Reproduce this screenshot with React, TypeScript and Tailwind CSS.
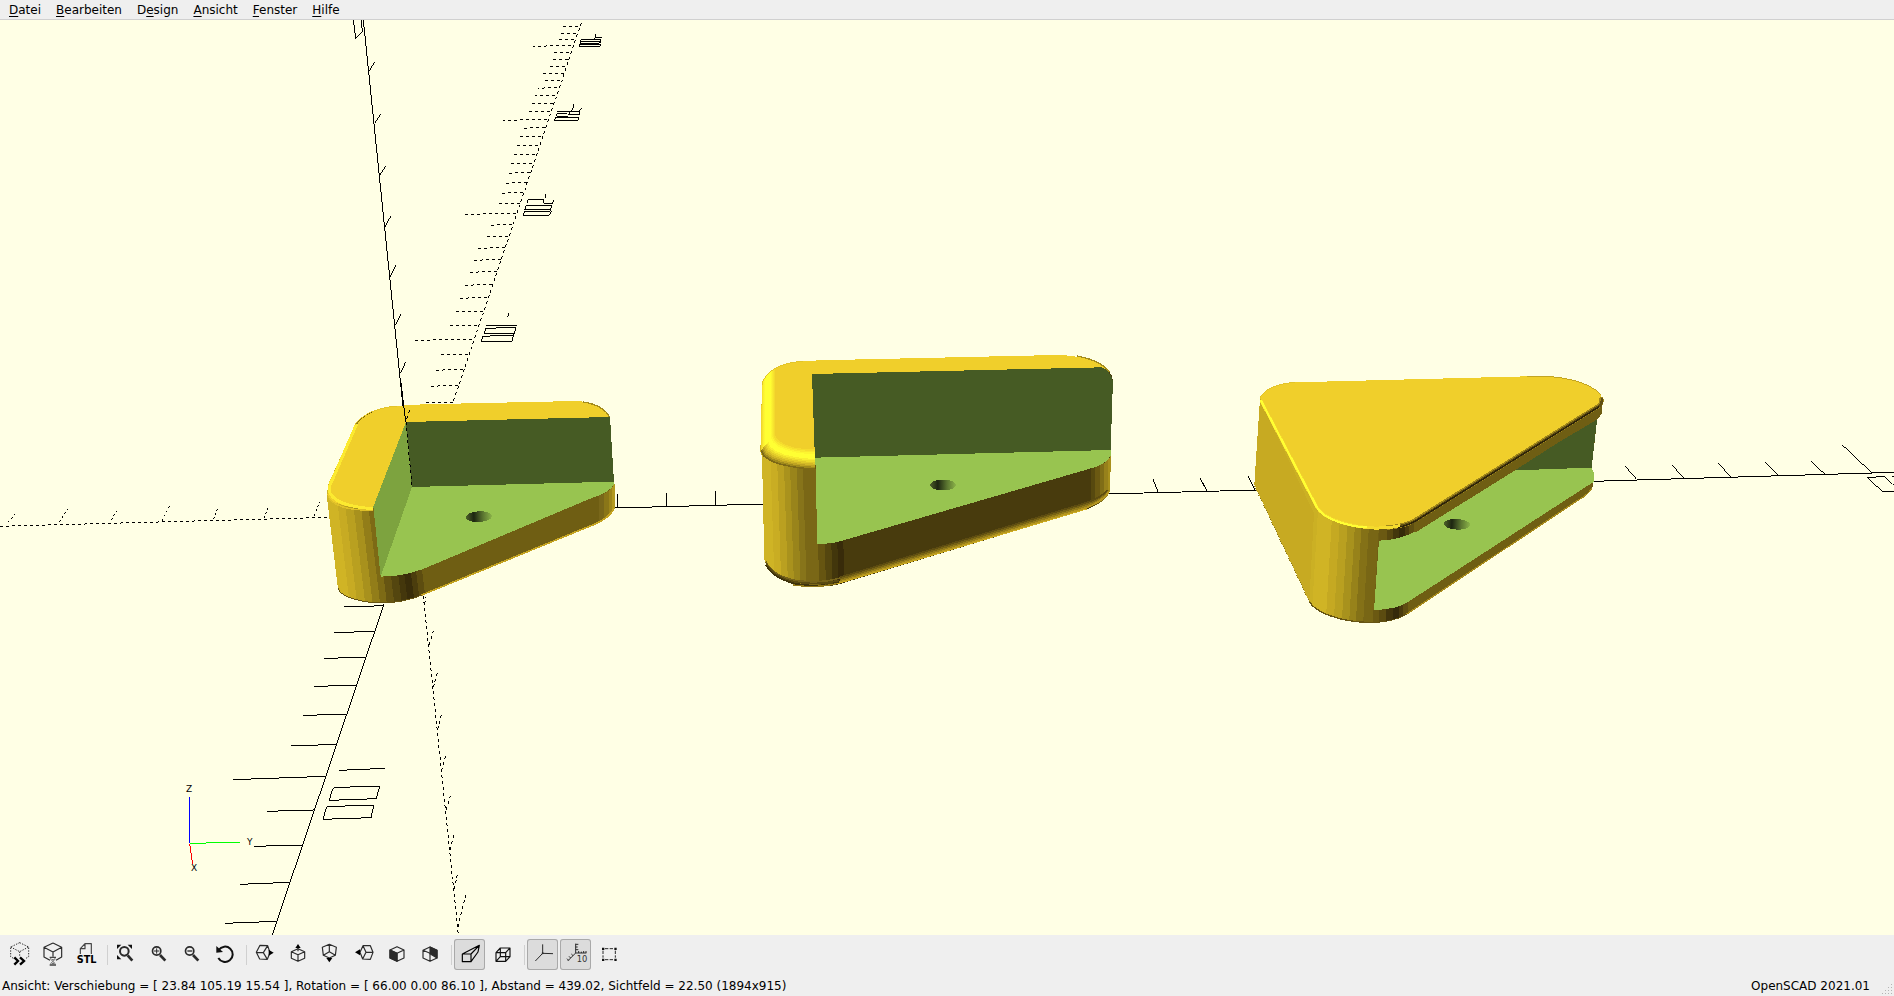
import type { ReactNode } from "react";

type Line = [number, number, number, number];
type Point = [number, number];

const MENUS = [
  { before: "", key: "D", after: "atei" },
  { before: "", key: "B", after: "earbeiten" },
  { before: "D", key: "e", after: "sign" },
  { before: "", key: "A", after: "nsicht" },
  { before: "", key: "F", after: "enster" },
  { before: "", key: "H", after: "ilfe" },
];

// The drawing groups below use three units per viewport pixel.
const Z_TICKS: Line[] = [
  [86, 185, 104, 157], [104, 340, 122, 312], [119, 497, 137, 468], [135, 650, 152, 619],
  [151, 800, 167, 766], [166, 946, 182, 913], [182, 1088, 197, 1056],
];

const X_FAR_TICKS: Line[] = [
  [715, 48, 669, 51], [708, 70, 660, 70], [702, 88, 655, 88], [694, 106, 579, 109],
  [688, 127, 642, 127], [685, 148, 636, 148], [676, 169, 627, 169], [672, 190, 609, 190],
  [660, 211, 612, 211], [652, 232, 594, 235], [645, 256, 585, 256], [640, 280, 576, 280],
  [630, 304, 567, 304], [622, 328, 489, 331], [615, 352, 549, 355], [603, 379, 540, 379],
  [595, 406, 528, 406], [585, 433, 519, 433], [577, 460, 510, 460], [570, 487, 501, 490],
  [560, 517, 492, 520], [550, 547, 480, 550], [540, 580, 471, 580], [528, 610, 372, 613],
  [516, 643, 447, 646], [503, 679, 435, 679], [495, 712, 414, 715], [483, 748, 399, 751],
  [470, 784, 387, 787], [457, 823, 372, 826], [442, 862, 357, 865], [428, 904, 342, 904],
  [412, 946, 327, 946], [397, 988, 222, 991], [385, 1033, 297, 1033], [370, 1078, 282, 1081],
  [355, 1126, 267, 1129], [338, 1177, 249, 1177],
];

const X_NEAR_TICKS: Line[] = [
  [522, 51, 642, 47], [492, 128, 615, 124], [462, 205, 588, 202], [432, 289, 560, 286],
  [399, 376, 530, 373], [363, 468, 500, 463], [189, 569, 467, 559], [291, 664, 432, 660],
  [252, 769, 398, 765], [210, 883, 360, 877], [165, 1000, 320, 994],
];

const Z_LOW_TICKS: Line[] = [
  [764, 42, 768, 22], [778, 165, 790, 120], [790, 292, 802, 250], [803, 418, 814, 373],
  [815, 542, 827, 495], [829, 660, 841, 615], [841, 780, 851, 735], [853, 898, 862, 852],
  [864, 1010, 887, 915],
];

const Y_LEFT_TICKS: Line[] = [
  [25, 97, 45, 72], [178, 95, 203, 58], [334, 90, 350, 62], [487, 92, 509, 48],
  [640, 88, 653, 54], [793, 85, 805, 50], [943, 77, 958, 37],
];

const Y_RIGHT_TICKS: Line[] = [
  [170, 148, 136, 109], [312, 145, 277, 106], [453, 142, 415, 99],
  [596, 137, 556, 97], [735, 133, 694, 94], [877, 130, 787, 45],
];

const Y_MID_LINES: Line[] = [
  [615, 508, 764, 504], [1106, 494, 1258, 490],
  [617, 508, 618, 494], [666, 506, 667, 493], [715, 505, 716, 491],
  [1158, 492, 1153, 479], [1207, 491, 1200, 478], [1255, 490, 1248, 476],
];

function toPath(lines: Line[]) {
  return lines.map(([x1, y1, x2, y2]) => `M${x1} ${y1}L${x2} ${y2}`).join("");
}

function Group({ x, y, children }: { x: number; y: number; children: ReactNode }) {
  return <g transform={`translate(${x} ${y}) scale(0.33333)`}>{children}</g>;
}

// Horizontal facets: every entry is [start, colour] and runs up to the next start.
function Facets({ id, y1 = 0, y2 = 0, steps }: { id: string; y1?: number; y2?: number; steps: [number, string][] }) {
  const from = steps[0][0];
  const to = steps[steps.length - 1][0];
  return (
    <linearGradient id={id} gradientUnits="userSpaceOnUse" x1={from} y1={y1} x2={to} y2={y2}>
      {steps.map(([at, color], i) => {
        const next = steps[i + 1] ? steps[i + 1][0] : to;
        return [
          <stop key={`${i}a`} offset={(at - from) / (to - from)} stopColor={color} />,
          <stop key={`${i}b`} offset={(next - from) / (to - from)} stopColor={color} />,
        ];
      })}
    </linearGradient>
  );
}

const RIM_OUTER: Point[] = [[62, 332], [70, 350], [95, 366], [125, 376], [165, 384], [200, 388], [225, 390]];
const RIM_INNER: Point[] = [[105, 284], [108, 294], [120, 305], [138, 315], [165, 323], [195, 327], [224, 328]];
const RIM_COLORS = [
  "#7d6916", "#a08a1c", "#bfa422", "#d3b926", "#e2cb29", "#eedd2c", "#f9ee30", "#ffff33",
  "#ffff33", "#ffff33", "#fdf631", "#f9e82f", "#f5dc2d", "#f0cf2b",
];

function rimPath(t: number) {
  const pts = RIM_OUTER.map(([x, y], i) => [x + (RIM_INNER[i][0] - x) * t, y + (RIM_INNER[i][1] - y) * t]);
  return `M${pts.map((p) => p.join(" ")).join("L")}L218 110H105Z`;
}

function Hole({ cx, cy, angle = 0 }: { cx: number; cy: number; angle?: number }) {
  return <ellipse cx={cx} cy={cy} rx="39" ry="16" fill="url(#hole)" transform={`rotate(${angle} ${cx} ${cy})`} />;
}

function Axes() {
  return (
    <g stroke="#000" fill="none" strokeWidth="1">
      <path d={toPath(Y_MID_LINES)} />
      <g strokeWidth="3">
        <Group x={340} y={10}>
          <path d="M70 30L190 1200" />
          <path d={toPath(Z_TICKS)} />
          <path d="M40 30L47 86L67 66L64 30" />
          <path d="M724 38L338 1180" strokeDasharray="9 9" />
          <path d={toPath(X_FAR_TICKS)} strokeDasharray="9 9" />
          <path d="M438 946H530M432 970L438 955L528 952L523 971ZM424 995L429 979L521 975L516 994ZM502 922L508 908" />
          <path d="M550 616L554 604L634 603L628 616ZM554 599L558 587H636L632 598ZM562 580L564 570L612 568V580H638L641 570M616 563V552" />
          <path d="M643 331L647 322H717L713 331ZM648 319L652 310H680M652 304H719L717 315H684L690 307M650 319H684M700 292V282M695 302L700 292M719 302L725 294" />
          <path d="M716 109L720 103H782L780 109ZM720 100L722 90H783L780 99ZM720 94H782M764 90V83H786M767 82V73" />
        </Group>
        <Group x={170} y={590}>
          <path d="M642 42L307 1034" />
          <path d={toPath(X_NEAR_TICKS)} />
          <path d="M507 541L645 535M488 596L498 592L629 589L619 626L478 631ZM470 650L612 645L603 683L459 688Z" />
          <path d="M760 18L865 1034" strokeDasharray="9 9" />
          <path d={toPath(Z_LOW_TICKS)} strokeDasharray="9 9" />
        </Group>
        <Group x={0} y={490}>
          <path d="M0 109L985 82" strokeDasharray="9 9" />
          <path d={toPath(Y_LEFT_TICKS)} strokeDasharray="6 8" />
        </Group>
        <Group x={1580} y={430}>
          <path d="M38 154L942 127" />
          <path d={toPath(Y_RIGHT_TICKS)} />
          <path d="M942 184H907L862 143L914 139L938 163H942M937 139H942" />
        </Group>
      </g>
    </g>
  );
}

function CornerLow() {
  return (
    <Group x={310} y={380}>
      <path
        d="M135 135C150 110 190 84 282 76L340 73L800 63C850 66 890 85 899 112L912 305L915 320V380C912 400 890 415 860 430L335 645C300 660 260 670 205 670C150 667 88 650 83 620L50 345L56 310Z"
        fill="url(#corner-low)"
      />
      <path d="M860 350C890 340 908 325 913 310L916 320V380C912 400 890 415 860 430Z" fill="url(#corner-low-end)" />
      <path d="M912 385C905 402 885 418 860 430L335 645" fill="none" stroke="#c4a320" strokeWidth="5" />
      <path d="M335 645C300 660 260 669 205 669C150 666 90 650 84 625" fill="none" stroke="#665413" strokeWidth="3" />
      <path
        d="M140 135C155 110 190 84 282 76L340 73L800 63C850 66 890 85 897 112L288 126L190 386C120 386 60 372 52 345L58 305Z"
        fill="#f0cf2b"
      />
      <path d="M140 132L58 320C52 345 80 380 190 386" fill="none" stroke="#fcea30" strokeWidth="9" />
      <path d="M54 350C70 378 110 391 190 391" fill="none" stroke="#dfc028" strokeWidth="4" />
      <path d="M135 135C150 110 190 84 262 78" fill="none" stroke="#e3c429" strokeWidth="3" />
      <path d="M820 66C860 72 890 90 898 111" fill="none" stroke="#a48c1c" strokeWidth="4" />
      <path d="M288 126L190 380L212 590L306 321Z" fill="#7da33f" />
      <path d="M288 126L900 111L912 305L306 321Z" fill="#465b24" />
      <path d="M306 321L912 305V314C900 332 880 343 850 352L380 550C320 578 270 590 212 590Z" fill="#98c450" />
      <Hole cx={507} cy={410} angle={-3} />
      <path d="M272 0L287 126" stroke="#000" strokeWidth="3" />
      <path d="M290 116L302 84M288 126L306 321" stroke="#000" strokeWidth="3" strokeDasharray="9 9" fill="none" />
    </Group>
  );
}

function CornerHigh() {
  return (
    <Group x={740} y={340}>
      <path
        d="M66 135C70 110 100 68 190 64L235 61L950 45C1010 45 1090 62 1115 105L1118 120V150L1112 330L1110 450C1108 470 1085 492 1040 508L300 732C270 742 200 743 160 732C110 720 80 690 73 660L66 350L61 335Z"
        fill="url(#corner-high)"
      />
      <path d="M1050 386C1090 376 1108 362 1113 345L1110 450C1108 470 1085 492 1040 508Z" fill="url(#corner-high-end)" />
      <g fill="none" strokeWidth="5">
        <path d="M300 712L1040 488C1070 478 1090 465 1104 450" stroke="#5d4c11" />
        <path d="M300 717L1040 493C1072 483 1094 467 1106 452" stroke="#776314" />
        <path d="M300 722L1040 498C1074 486 1096 469 1108 452" stroke="#957c19" />
        <path d="M298 727L1040 503C1076 489 1098 471 1109 452" stroke="#b5961e" />
        <path d="M290 732L1040 507" stroke="#cdac22" strokeWidth="3" />
      </g>
      <g fill="none" strokeWidth="5">
        <path d="M77 665C90 692 120 712 165 721C210 728 260 726 300 714" stroke="#76631a" />
        <path d="M78 670C92 697 122 716 165 726C210 733 260 731 298 721" stroke="#5a4a11" />
        <path d="M78 675C92 702 122 720 165 731C200 738 230 738 255 735" stroke="#3f330b" />
        <path d="M160 735C200 741 250 741 290 731" stroke="#93791a" strokeWidth="4" />
      </g>
      <path
        d="M66 135C70 110 100 68 190 64L235 61L950 45C1010 45 1090 62 1110 95L1085 82L216 102L224 300H62Z"
        fill="#f0cf2b"
      />
      {RIM_COLORS.map((color, i) => (
        <path key={i} d={rimPath(i / (RIM_COLORS.length - 1))} fill={color} />
      ))}
      <path d="M66 135C70 112 90 92 110 84C105 100 105 120 105 284L62 332Z" fill="url(#high-rim)" />
      <path d="M66 135C70 110 100 68 190 64" fill="none" stroke="#e3c429" strokeWidth="3" />
      <path d="M1010 48C1055 56 1092 74 1108 96" fill="none" stroke="#a48c1c" strokeWidth="4" />
      <path d="M216 102L1085 82C1102 88 1114 105 1118 122V150L1112 330L226 353L224 333Z" fill="#465b24" />
      <path d="M226 353L1112 330V347C1105 365 1080 378 1050 386L300 604C280 609 260 612 232 612Z" fill="#98c450" />
      <Hole cx={609} cy={435} />
    </Group>
  );
}

function Wedge() {
  return (
    <Group x={1240} y={360}>
      <path
        d="M60 115C65 95 100 72 165 67L860 49H930C1010 55 1085 90 1088 120L1085 160L1072 175L1055 322L1062 340L1058 380C1050 398 1035 408 1015 420L500 762C470 780 430 788 380 788C300 785 225 755 208 725L43 375L45 340Z"
        fill="url(#wedge)"
      />
      <path d="M60 120L222 460L208 725L43 375Z" fill="#c7aa22" />
      <path d="M43 377L208 725" stroke="#8a7418" strokeWidth="3" strokeDasharray="3 5" />
      <path d="M208 725C225 757 300 785 380 787C430 788 470 780 500 762" fill="none" stroke="#665413" strokeWidth="4" />
      <path d="M400 750L510 722L1060 362L1058 380C1050 398 1035 408 1015 420L500 762C470 780 435 786 400 786Z" fill="url(#wedge-foot)" />
      <path d="M1056 385C1045 402 1030 412 1015 420L500 762" fill="none" stroke="#a88b1c" strokeWidth="4" />
      <path d="M417 542L530 515L840 322L1072 172L1055 323L1062 340V365L510 722C490 738 450 750 402 750Z" fill="#98c450" />
      <path d="M825 331L1072 172L1055 323Z" fill="#465b24" />
      <path d="M417 480V542C460 540 495 532 530 513L840 316L1072 178L1085 162L1088 120Z" fill="url(#wedge-lip)" />
      <path
        d="M62 115C67 95 100 72 165 67L860 49H930C1010 55 1084 90 1086 115L1082 128L520 482C490 500 450 505 400 505C330 500 250 480 232 445L62 125Z"
        fill="#f0cf2b"
      />
      <g fill="none">
        <path d="M440 503C480 500 505 494 528 479L1077 137C1085 130 1086 122 1083 112" stroke="#a0871c" strokeWidth="13" />
        <path d="M450 503C485 500 508 494 530 480L1078 138C1086 132 1087 124 1085 115" stroke="#5f4e12" strokeWidth="8" />
        <path d="M475 502C495 498 515 491 530 481L1078 140" stroke="#2d2308" strokeWidth="4" />
        <path d="M62 120L230 440C250 478 330 500 400 504C440 505 460 502 480 497" stroke="#f5dc2d" strokeWidth="9" />
        <path d="M62 120L230 440C250 478 320 498 380 502" stroke="#ffff33" strokeWidth="6" />
        <path d="M60 117C65 95 100 72 165 67" stroke="#e3c429" strokeWidth="3" />
        <path d="M860 50H930C1005 55 1065 80 1082 105" stroke="#c3a522" strokeWidth="3" />
      </g>
      <Hole cx={651} cy={493} angle={3} />
    </Group>
  );
}

function Viewport() {
  return (
    <svg
      viewBox="0 20 1894 915"
      preserveAspectRatio="xMidYMid slice"
      shapeRendering="crispEdges"
      role="img"
      aria-label="3D-Ansicht"
      className="block h-full w-full"
    >
      <defs>
        <Facets
          id="corner-low"
          y1={600}
          y2={569}
          steps={[
            [80, "#d0b425"], [110, "#c7ab23"], [132, "#b9a020"], [156, "#a8911d"], [178, "#927d19"],
            [200, "#7d6a15"], [220, "#665512"], [242, "#54460f"], [264, "#44370c"], [282, "#392d0a"],
            [302, "#4b3d0d"], [318, "#5d4d10"], [336, "#6f5e13"],
          ]}
        />
        <Facets
          id="corner-low-end"
          steps={[[860, "#6f5e13"], [868, "#79671a"], [882, "#8a7618"], [896, "#9d861b"], [906, "#b2991f"], [916, "#b2991f"]]}
        />
        <Facets
          id="corner-high"
          y1={560}
          y2={552}
          steps={[
            [66, "#cfb425"], [98, "#c9ad23"], [118, "#baa020"], [138, "#a9921d"], [156, "#99841b"],
            [176, "#87741a"], [194, "#7a6716"], [232, "#665511"], [252, "#54460f"], [272, "#42360c"],
            [290, "#382b0a"], [308, "#483b0d"],
          ]}
        />
        <Facets
          id="corner-high-end"
          steps={[[1050, "#483b0d"], [1052, "#57490f"], [1066, "#6b5912"], [1080, "#806d17"], [1092, "#97811b"], [1104, "#a8901d"], [1114, "#a8901d"]]}
        />
        <Facets
          id="wedge"
          y1={600}
          y2={612}
          steps={[
            [208, "#cbb024"], [225, "#d0b425"], [268, "#c5a922"], [292, "#b9a020"], [316, "#a8921d"],
            [338, "#97821a"], [358, "#847117"], [380, "#786615"], [410, "#6f5e13"],
          ]}
        />
        <Facets
          id="wedge-foot"
          steps={[
            [400, "#6b5912"], [418, "#5c4c10"], [438, "#43360c"], [458, "#352a0a"], [476, "#4a3b0d"],
            [490, "#5f4f11"], [505, "#6f5e13"],
          ]}
        />
        <Facets
          id="wedge-lip"
          steps={[
            [416, "#6b5912"], [440, "#58480f"], [460, "#43360c"], [478, "#352a0a"], [494, "#4a3b0d"],
            [506, "#5f4f11"], [522, "#6f5e13"],
          ]}
        />
        <linearGradient id="high-rim" gradientUnits="userSpaceOnUse" x1="64" y1="0" x2="106" y2="0">
          <stop offset="0" stopColor="#f0d42c" />
          <stop offset="0.15" stopColor="#fbf030" />
          <stop offset="0.3" stopColor="#ffff33" />
          <stop offset="0.65" stopColor="#ffff33" />
          <stop offset="0.95" stopColor="#f4d92d" />
          <stop offset="1" stopColor="#f0cf2b" />
        </linearGradient>
        <linearGradient id="hole">
          <stop offset="0" stopColor="#4d6129" />
          <stop offset="0.3" stopColor="#1d2611" />
          <stop offset="0.65" stopColor="#5a7430" />
          <stop offset="1" stopColor="#8bb349" />
        </linearGradient>
      </defs>
      <rect y="20" width="1894" height="915" fill="#ffffe5" />
      <Axes />
      <CornerLow />
      <CornerHigh />
      <Wedge />
      <Group x={170} y={590}>
        <g fill="none" strokeWidth="3">
          <path d="M59 621V760" stroke="#0000ff" />
          <path d="M59 760L210 757" stroke="#00ff00" />
          <path d="M59 762L68 822" stroke="#ff0000" />
        </g>
        <g fontFamily="'DejaVu Sans', sans-serif" fontSize="27" textAnchor="middle" fill="#000">
          <text x="57" y="606">Z</text>
          <text x="239" y="765">Y</text>
          <text x="72" y="843">X</text>
        </g>
      </Group>
    </svg>
  );
}

type ToolProps = { label: string; x: number; pressed?: boolean; children: ReactNode };

function Tool({ label, x, pressed, children }: ToolProps) {
  return (
    <button
      type="button"
      aria-label={label}
      aria-pressed={pressed}
      className={`h-[31px] w-[31px] shrink-0 rounded-[3px] ${pressed ? "bg-[#dcdcdc] ring-1 ring-[#a9a9a9] ring-inset" : ""}`}
    >
      <svg
        viewBox={`${x} 27 93 93`}
        className="block h-[31px] w-[31px]"
        fill="none"
        stroke="#2b2b2b"
        strokeWidth="3.5"
        strokeLinejoin="round"
      >
        {children}
      </svg>
    </button>
  );
}

function Separator() {
  return <span className="h-5 w-[5px] shrink-0 border-r border-[#d0d0d0]" />;
}

function Toolbar() {
  return (
    <div role="toolbar" className="flex items-center gap-[2px] px-1 py-1">
      <Tool label="Vorschau" x={12}>
        <path d="M59 38L86 51V80L78 85M59 38L32 51V80L40 85M32 51L59 65L86 51M59 65V78" strokeDasharray="4 4" strokeWidth="3" />
        <path d="M43 82L54 93L43 104M60 82L72 93L60 104" stroke="#000" strokeWidth="7" strokeLinejoin="miter" />
      </Tool>
      <Tool label="Rendern" x={111}>
        <path d="M159 39L185 52V81L168 91M150 91L132 81V52L159 39M132 52L159 66L185 52M159 66V80" />
        <path d="M149 82H168M149 105H168" stroke="#444" strokeWidth="4" />
        <path d="M152 84C152 90 156 92 158 94C156 96 152 99 152 103M165 84C165 90 161 92 159 94C161 96 165 99 165 103" stroke="#555" strokeWidth="2.5" />
        <path d="M154 103L159 97L164 103ZM155 87H162L159 92Z" fill="#666" stroke="none" />
      </Tool>
      <Tool label="STL exportieren" x={210}>
        <path d="M241 72V56L255 41H274V72M255 41V56H241" stroke="#444" />
        <text
          x="260"
          y="100"
          textAnchor="middle"
          fontFamily="'DejaVu Sans', sans-serif"
          fontWeight="bold"
          fontSize="29"
          fill="#000"
          stroke="none"
        >
          STL
        </text>
      </Tool>
      <Separator />
      <Tool label="Alles anzeigen" x={330}>
        <path d="M351 44H364L351 57ZM396 44H383L396 57ZM351 88V75L364 88Z" fill="#111" stroke="none" />
        <circle cx="373" cy="64" r="13" strokeWidth="6" />
        <path d="M383 76L397 92" strokeWidth="8" />
      </Tool>
      <Tool label="Vergrößern" x={429}>
        <circle cx="470" cy="63" r="12.5" strokeWidth="5" />
        <path d="M470 55V71M462 63H478" strokeWidth="3" />
        <path d="M480 75L496 92" strokeWidth="8" />
      </Tool>
      <Tool label="Verkleinern" x={528}>
        <circle cx="569" cy="63" r="12.5" strokeWidth="5" />
        <path d="M562 63H577" strokeWidth="4" />
        <path d="M579 75L595 92" strokeWidth="8" />
      </Tool>
      <Tool label="Ansicht zurücksetzen" x={627}>
        <path d="M656 60A23 23 0 1 1 655 84" stroke="#111" strokeWidth="6" />
        <path d="M649 48V68L669 66Z" fill="#111" stroke="none" />
      </Tool>
      <Separator />
      <Tool label="Rechts" x={747}>
        <path d="M780 46L803 47L810 68L802 88L779 87L769 67ZM769 67L790 68L803 47M790 68L802 88" />
        <path d="M806 59L821 68L806 77Z" fill="#000" stroke="none" />
      </Tool>
      <Tool label="Oben" x={846}>
        <path d="M894 56L914 65V85L894 94L874 85V65ZM874 65L894 74L914 65M894 74V94" />
        <path d="M886 54L894 42L902 54Z" fill="#000" stroke="none" />
        <path d="M894 54V64" />
      </Tool>
      <Tool label="Unten" x={-15}>
        <path d="M28 43L49 52L46 76L28 84L10 76L7 52ZM28 43V65L46 76M28 65L10 76" />
        <path d="M19 84L28 97L37 84Z" fill="#000" stroke="none" />
      </Tool>
      <Tool label="Links" x={84}>
        <path d="M129 47L151 47L159 67L151 88L128 87L120 67ZM129 47L138 67L128 87M138 67H159" />
        <path d="M105 67L120 58V76Z" fill="#000" stroke="none" />
      </Tool>
      <Tool label="Vorne" x={183}>
        <path d="M231 50L252 60V84L231 94L210 84V60ZM210 60L231 70L252 60M231 70V94" />
        <path d="M210 60L231 70V94L210 84Z" fill="#2b2b2b" />
      </Tool>
      <Tool label="Hinten" x={282}>
        <path d="M330 51L351 61V84L330 94L309 84V61ZM309 61L330 70M330 70V94" />
        <path d="M330 51L351 61V84L330 71Z" fill="#2b2b2b" />
      </Tool>
      <Separator />
      <Tool label="Perspektivisch" x={402} pressed>
        <path d="M427 72H453V95H427ZM427 72L478 46L453 72M453 95L474 66L478 46" stroke="#000" />
      </Tool>
      <Tool label="Orthogonal" x={501}>
        <path d="M528 68H557V94H528ZM541 54H570V80H541ZM528 68L541 54M557 68L570 54M557 94L570 80M528 94L541 80" stroke="#111" />
      </Tool>
      <Separator />
      <Tool label="Achsen anzeigen" x={621} pressed>
        <path d="M668 43V70L699 71M668 70L646 93" strokeWidth="3" />
        <circle cx="668" cy="70" r="3" fill="#2b2b2b" stroke="none" />
      </Tool>
      <Tool label="Skalenmarkierungen" x={720} pressed>
        <path d="M767 41V69H799M767 43H775M767 51H773M767 59H775M776 69V63M784 69V65M791 69V63M798 69V63M767 69L743 93M759 77L754 72M752 84L747 79M746 91L741 86" strokeWidth="3" />
        <text x="786" y="95" textAnchor="middle" fontFamily="'DejaVu Sans', sans-serif" fontSize="25" fill="#333" stroke="none">
          10
        </text>
      </Tool>
      <Tool label="Kanten anzeigen" x={819}>
        <path d="M855 56H881M855 89H881M849 62V83M886 62V83" strokeWidth="3" strokeDasharray="10 4" />
        <path d="M846 53H853V60H846ZM883 53H890V60H883ZM846 86H853V93H846ZM883 86H890V93H883Z" fill="#111" stroke="none" />
      </Tool>
    </div>
  );
}

export default function App() {
  return (
    <div className="flex h-screen flex-col bg-[#efefef] font-['DejaVu_Sans',sans-serif] text-xs text-black">
      <nav className="flex h-5 shrink-0 items-end gap-px border-b border-[#d0d0d0] pl-[2px]">
        {MENUS.map(({ before, key, after }) => (
          <button key={before + key + after} type="button" className="px-[7px] leading-[18px]">
            {before}
            <span className="underline decoration-1 underline-offset-2">{key}</span>
            {after}
          </button>
        ))}
      </nav>
      <main className="min-h-0 flex-1 overflow-hidden bg-[#ffffe5]">
        <Viewport />
      </main>
      <Toolbar />
      <footer className="flex h-[22px] shrink-0 items-end justify-between pl-[2px] leading-5 whitespace-nowrap">
        <span>
          Ansicht: Verschiebung = [ 23.84 105.19 15.54 ], Rotation = [ 66.00 0.00 86.10 ], Abstand = 439.02, Sichtfeld = 22.50 (1894x915)
        </span>
        <span className="flex items-end gap-3">
          OpenSCAD 2021.01
          <svg viewBox="0 0 12 12" className="h-3 w-3" fill="#b4b4b4" shapeRendering="crispEdges">
            <path d="M9 0h1v1h-1zM9 3h1v1h-1zM6 3h1v1h-1zM9 6h1v1h-1zM6 6h1v1h-1zM3 6h1v1h-1zM9 9h1v1h-1zM6 9h1v1h-1zM3 9h1v1h-1zM0 9h1v1h-1z" />
          </svg>
        </span>
      </footer>
    </div>
  );
}
